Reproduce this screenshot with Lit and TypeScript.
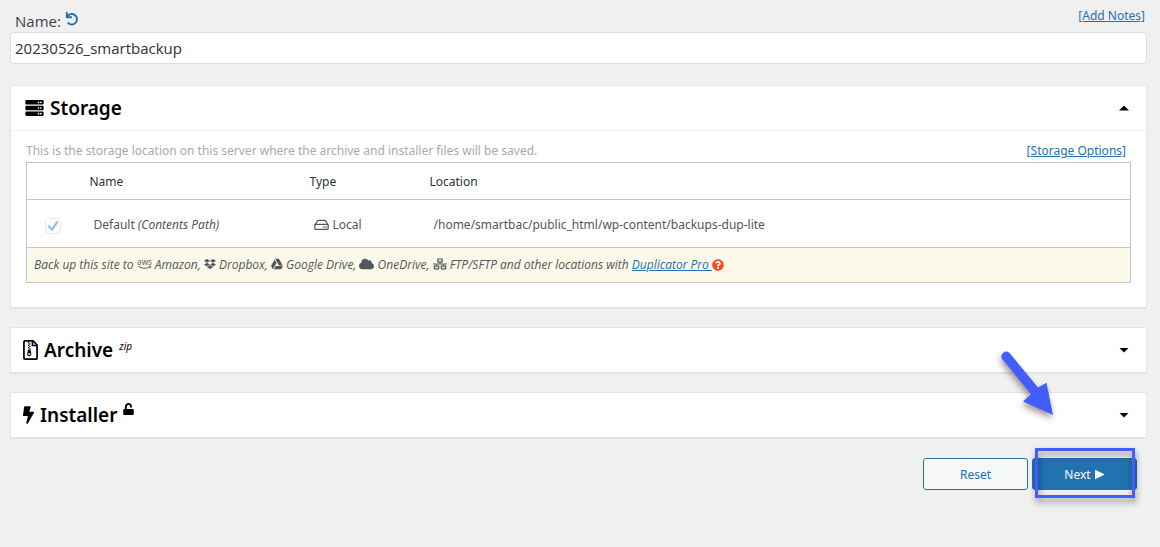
import { LitElement, html, svg, css, nothing } from "lit";
import { customElement, state } from "lit/decorators.js";

const icon = (viewBox: string, cls: string, body: unknown) =>
  html`<svg class="icon ${cls}" viewBox=${viewBox} aria-hidden="true">${body}</svg>`;

const undoIcon = icon(
  "0 0 14 14",
  "undo",
  svg`<path d="M1.8 .8V5.2H6.2M2.2 4.8A5.2 5.2 0 1 1 3.2 11" fill="none" stroke="currentColor" stroke-width="1.9" stroke-linecap="round" stroke-linejoin="round"/>`
);

const serverIcon = icon(
  "0 0 512 448",
  "server",
  svg`<path fill-rule="evenodd" d="M32 0h448c18 0 32 14 32 32v64c0 18-14 32-32 32H32c-18 0-32-14-32-32V32c0-18 14-32 32-32zm400 40a24 24 0 1 0 0 48 24 24 0 0 0 0-48zm-64 0a24 24 0 1 0 0 48 24 24 0 0 0 0-48zM32 160h448c18 0 32 14 32 32v64c0 18-14 32-32 32H32c-18 0-32-14-32-32v-64c0-18 14-32 32-32zm400 40a24 24 0 1 0 0 48 24 24 0 0 0 0-48zm-64 0a24 24 0 1 0 0 48 24 24 0 0 0 0-48zM32 320h448c18 0 32 14 32 32v64c0 18-14 32-32 32H32c-18 0-32-14-32-32v-64c0-18 14-32 32-32zm400 40a24 24 0 1 0 0 48 24 24 0 0 0 0-48zm-64 0a24 24 0 1 0 0 48 24 24 0 0 0 0-48z"/>`
);

const archiveIcon = icon(
  "0 0 384 512",
  "file",
  svg`<path d="M48 24h208l104 104v336c0 13-11 24-24 24H48c-13 0-24-11-24-24V48c0-13 11-24 24-24z" fill="none" stroke="currentColor" stroke-width="44"/>
  <path d="M242 24v118h118" fill="none" stroke="currentColor" stroke-width="40"/>
  <path d="M128 48h32v32h-32zM160 80h32v32h-32zM128 112h32v32h-32zM160 144h32v32h-32zM128 176h32v32h-32zM160 208h32v32h-32z"/>
  <path fill-rule="evenodd" d="M130 240h60l22 104c8 42-18 72-54 72s-60-32-52-72zm30 96c-18 0-32 10-32 24s14 24 32 24 32-10 32-24-14-24-32-24z"/>`
);

const boltIcon = icon(
  "0 0 320 512",
  "bolt",
  svg`<path d="M296 160H180.6l42.6-129.8C227.2 15 215.7 0 200 0H56C44 0 33.8 8.9 32.2 20.8l-32 240C-1.7 275.2 9.5 288 24 288h118.7L96.6 482.5c-3.6 15.2 8 29.5 23.3 29.5 8.4 0 16.4-4.4 20.8-12l176-304c9.3-15.9-2.2-36-20.7-36z"/>`
);

const unlockIcon = icon(
  "0 0 448 512",
  "unlock",
  svg`<path d="M400 256H152V152.9c0-39.6 31.7-72.5 71.3-72.9 40-.4 72.7 32.1 72.7 72v16c0 13.3 10.7 24 24 24h32c13.3 0 24-10.7 24-24v-16C376 68 307.5-.3 223.5 0 139.5.3 72 69.5 72 153.5V256H48c-26.5 0-48 21.5-48 48v160c0 26.5 21.5 48 48 48h352c26.5 0 48-21.5 48-48V304c0-26.5-21.5-48-48-48z"/>`
);

const driveIcon = icon(
  "0 0 16 12",
  "hdd",
  svg`<path d="M1 6.2 3.6 1.6C3.8 1.2 4.2 1 4.6 1h6.8c.4 0 .8.2 1 .6L15 6.2" fill="none" stroke="currentColor" stroke-width="1.3"/>
  <rect x=".8" y="5.4" width="14.4" height="5.2" rx="1" fill="none" stroke="currentColor" stroke-width="1.3"/>
  <circle cx="10.4" cy="8.1" r=".9"/><circle cx="12.9" cy="8.1" r=".9"/>`
);

const awsIcon = icon(
  "0 0 16 12",
  "aws",
  svg`<text x="8" y="6" text-anchor="middle" font-size="9" font-style="normal" font-weight="400">aws</text>
  <path d="M1 7.8c4 2.8 9 3 12.8 1M12.3 8.1c1-.5 2-.5 2.6-.1.1.8-.3 1.700-1 2.400" fill="none" stroke="currentColor" stroke-width="1"/>`
);

const dropboxIcon = icon(
  "0 0 528 512",
  "dropbox",
  svg`<path d="M264.400 116.300l-132 84.300 132 84.300-132 84.300L0 284.100l132.300-84.300L0 116.300 132.300 32l132.100 84.300zM131.600 395.700l132-84.300 132 84.300-132 84.300-132-84.300zm132.800-111.600l132-84.300-132-83.600L395.700 32 528 116.300l-132.300 84.300L528 284.800l-132.300 84.300-131.300-85z"/>`
);

const gdriveIcon = icon(
  "0 0 512 512",
  "gdrive",
  svg`<path d="M339 314.900L175.400 32h161.200l163.600 282.900H339zm-137.500 23.600L120.900 480h310.500L512 338.500H201.500zM154.100 67.400L0 338.500 80.600 480 237 208.800 154.100 67.400z"/>`
);

const cloudIcon = icon(
  "0 0 640 512",
  "cloud",
  svg`<path d="M537.600 226.600c4.100-10.700 6.400-22.400 6.400-34.600 0-53-43-96-96-96-19.700 0-38.100 6-53.300 16.200C367 64.200 315.300 32 256 32c-88.400 0-160 71.600-160 160 0 2.700.1 5.400.2 8.100C40.200 219.800 0 273.200 0 336c0 79.500 64.500 144 144 144h368c70.700 0 128-57.300 128-128 0-61.900-44-113.600-102.400-125.400z"/>`
);

const networkIcon = icon(
  "0 0 640 512",
  "network",
  svg`<path d="M220 28h200v132H220zM60 352h200v132H60zM380 352h200v132H380z" fill="none" stroke="currentColor" stroke-width="56"/>
  <path d="M0 232h640v48H0zM296 170h48v80h-48zM136 260h48v80h-48zM456 260h48v80h-48z"/>`
);

const helpIcon = icon(
  "0 0 512 512",
  "help",
  svg`<circle cx="256" cy="256" r="200" fill="#fff"/>
  <path d="M504 256c0 136.997-111.043 248-248 248S8 392.997 8 256C8 119.083 119.043 8 256 8s248 111.083 248 248zM262.655 90c-54.497 0-89.255 22.957-116.549 63.758-3.536 5.286-2.353 12.415 2.715 16.258l34.699 26.310c5.205 3.947 12.621 3.008 16.665-2.122 17.864-22.658 30.113-35.797 57.303-35.797 20.429 0 45.698 13.148 45.698 32.958 0 14.976-12.363 22.667-32.534 33.976C247.128 238.528 216 254.941 216 296v4c0 6.627 5.373 12 12 12h56c6.627 0 12-5.373 12-12v-1.333c0-28.462 83.186-29.647 83.186-106.667 0-58.002-60.165-102-116.531-102zM256 338c-25.365 0-46 20.635-46 46 0 25.364 20.635 46 46 46s46-20.636 46-46c0-25.365-20.635-46-46-46z"/>`
);

const pointerArrow = svg`<path d="M14.700 8.300 43 42.500 51.500 37.800 58 70 28 56.500 36 49.300 7.400 14.200A4.700 4.700 0 0 1 14.700 8.300Z"/>`;

@customElement("app-root")
export class AppRoot extends LitElement {
  @state() private open: Record<string, boolean> = { storage: true };

  static styles = css`
    :host {
      display: block;
      min-height: 100vh;
      box-sizing: border-box;
      padding: 8px 13px 48px 10px;
      background: #f0f0f1;
      color: #3c434a;
      font: 12px/20px "Segoe UI", "Noto Sans", "Open Sans", sans-serif;
    }
    *, *::before { box-sizing: border-box; }
    .icon { fill: currentColor; flex: none; overflow: visible; }
    a { color: #2271b1; }
    button { font: inherit; cursor: pointer; }
    .name-row {
      display: flex;
      align-items: flex-start;
      justify-content: space-between;
      height: 24px;
      padding: 0 2px 0 5px;
    }
    .name-label {
      display: flex;
      gap: 4px;
      font-family: "Segoe UI", "Open Sans", "Noto Sans", sans-serif;
      font-size: 15px;
      line-height: 26px;
    }
    .name-row a { line-height: 16px; }
    .link-button {
      display: flex;
      height: 22px;
      align-items: center;
      padding: 0;
      border: 0;
      background: none;
      color: #2271b1;
    }
    .undo { width: 14px; height: 14px; }
    .name-input {
      display: block;
      width: 100%;
      height: 32px;
      padding: 0 4px;
      border: 1px solid #dcdcde;
      border-radius: 4px;
      background: #fff;
      color: #2c3338;
      font-family: "Segoe UI", "Open Sans", "Noto Sans", sans-serif;
      font-size: 15px;
    }
    .panels { display: grid; gap: 18px; margin-top: 21px; }
    .panel { border: 1px solid #e2e4e7; border-bottom-width: 2px; background: #fff; }
    .panel-head {
      display: flex;
      align-items: center;
      justify-content: space-between;
      height: 44px;
      padding: 0 17px 0 12px;
    }
    .panel-head.open { height: 45px; padding-left: 14px; border-bottom: 1px solid #f0f0f1; }
    .title {
      display: flex;
      align-items: center;
      gap: 6px;
      margin: 0;
      color: #000;
      font-size: 19px;
      font-weight: 600;
      line-height: 24px;
    }
    .title sup {
      align-self: flex-start;
      font-size: 10px;
      font-weight: 400;
      font-style: italic;
      line-height: 16px;
    }
    .server { width: 19px; height: 16px; }
    .file { width: 15px; height: 20px; }
    .bolt { width: 11px; height: 18px; }
    .unlock { display: block; width: 11px; height: 12px; }
    .toggle { display: flex; padding: 4px 0; border: 0; background: none; color: #000; }
    .caret { width: 10px; height: 5px; background: currentColor; clip-path: polygon(0 0, 100% 0, 50% 100%); }
    .open .caret { clip-path: polygon(50% 0, 100% 100%, 0 100%); }
    .panel-body { padding: 10px 15px 24px; }
    .intro {
      display: flex;
      justify-content: space-between;
      margin-bottom: 1px;
      padding-right: 5px;
      color: #a7aaad;
    }
    .storage {
      width: 100%;
      border-collapse: collapse;
      border: 1px solid #c3c4c7;
      table-layout: fixed;
    }
    .storage tr { border-bottom: 1px solid #c3c4c7; }
    .storage th { height: 37px; padding: 2px 10px 0; color: #2c3338; font-weight: 400; text-align: left; }
    .storage td { height: 48px; padding: 2px 14px 0; color: #50575e; }
    .storage .check-cell { padding: 4px 0 0; text-align: center; }
    .check-col { width: 53px; }
    .name-col { width: 220px; }
    .type-col { width: 120px; }
    .type { display: flex; align-items: center; gap: 4px; }
    .hdd { width: 15px; height: 12px; }
    .tick {
      display: inline-block;
      appearance: none;
      width: 16px;
      height: 16px;
      margin: 0;
      border: 1px solid #e8e9eb;
      border-radius: 4px;
      background: #fff;
      vertical-align: middle;
    }
    .tick:checked::before {
      content: "";
      display: block;
      width: 12px;
      height: 12px;
      margin: 1px;
      background: #91c5ec;
      clip-path: polygon(0 52%, 16% 40%, 38% 62%, 78% 4%, 96% 12%, 42% 94%);
    }
    .storage .promo {
      height: 35px;
      padding: 0 7px;
      background: #fcf9e8;
      color: #50575e;
      font-family: "Segoe UI", "Open Sans", "Noto Sans", sans-serif;
      font-style: italic;
    }
    .promo .icon { vertical-align: -1px; }
    .aws { width: 15px; height: 11px; }
    .dropbox { width: 12px; height: 12px; }
    .gdrive { width: 12px; height: 12px; }
    .cloud { width: 15px; height: 12px; }
    .network { width: 14px; height: 12px; }
    .promo .help { width: 12px; height: 12px; color: #ff4a1c; vertical-align: -2px; }
    .actions { display: flex; justify-content: flex-end; gap: 4px; margin-top: 19px; padding-right: 10px; }
    .button {
      width: 105px;
      height: 32px;
      padding: 1px 0 0;
      border: 1px solid #2271b1;
      border-radius: 3px;
      background: #f6f7f7;
      color: #2271b1;
    }
    .button.primary {
      display: flex;
      align-items: center;
      justify-content: center;
      gap: 4px;
      background: #2271b1;
      color: #fff;
    }
    .play { width: 10px; height: 10px; background: currentColor; clip-path: polygon(0 0, 100% 50%, 0 100%); }
    .next { position: relative; }
    .highlight {
      position: absolute;
      inset: -10px 2px -8px 3px;
      border: 3px solid #415dfa;
      filter: drop-shadow(1px 4px 3px rgb(0 0 0 / 45%));
      pointer-events: none;
    }
    .pointer {
      position: absolute;
      left: -37px;
      top: -113px;
      width: 70px;
      height: 80px;
      fill: #415dfa;
      filter: drop-shadow(-1px 4px 3px rgb(60 20 30 / 45%));
      pointer-events: none;
    }
  `;

  private toggle(id: string) {
    this.open = { ...this.open, [id]: !this.open[id] };
  }

  private panel(id: string, label: string, glyph: unknown, note: unknown, body: unknown) {
    const isOpen = !!this.open[id];
    return html`<section class="panel">
      <header class="panel-head ${isOpen ? "open" : ""}">
        <h2 class="title">${glyph}<span>${label}</span>${note}</h2>
        <button class="toggle" aria-label="Toggle ${label}" aria-expanded=${isOpen} @click=${() => this.toggle(id)}>
          <span class="caret"></span>
        </button>
      </header>
      ${isOpen && body ? html`<div class="panel-body">${body}</div>` : nothing}
    </section>`;
  }

  private storageBody() {
    return html`<div class="intro">
        <span>This is the storage location on this server where the archive and installer files will be saved.</span>
        <a href="#storage">[Storage Options]</a>
      </div>
      <table class="storage">
        <colgroup>
          <col class="check-col" /><col class="name-col" /><col class="type-col" /><col />
        </colgroup>
        <thead>
          <tr><th></th><th>Name</th><th>Type</th><th>Location</th></tr>
        </thead>
        <tbody>
          <tr>
            <td class="check-cell"><input class="tick" type="checkbox" aria-label="Default" checked disabled /></td>
            <td>Default <i>(Contents Path)</i></td>
            <td><span class="type">${driveIcon}<span>Local</span></span></td>
            <td>/home/smartbac/public_html/wp-content/backups-dup-lite</td>
          </tr>
          <tr>
            <td class="promo" colspan="4">
              Back up this site to ${awsIcon} Amazon, ${dropboxIcon} Dropbox, ${gdriveIcon} Google Drive,
              ${cloudIcon} OneDrive, ${networkIcon} FTP/SFTP and other locations with
              <a href="#pro">Duplicator Pro&nbsp;</a>${helpIcon}
            </td>
          </tr>
        </tbody>
      </table>`;
  }

  render() {
    return html`
      <div class="name-row">
        <div class="name-label">
          <label for="package-name">Name:</label>
          <button class="link-button" aria-label="Reset name">${undoIcon}</button>
        </div>
        <a href="#notes">[Add Notes]</a>
      </div>
      <input class="name-input" id="package-name" type="text" value="20230526_smartbackup" />
      <div class="panels">
        ${this.panel("storage", "Storage", serverIcon, nothing, this.storageBody())}
        ${this.panel("archive", "Archive", archiveIcon, html`<sup>zip</sup>`, nothing)}
        ${this.panel("installer", "Installer", boltIcon, html`<sup>${unlockIcon}</sup>`, nothing)}
      </div>
      <div class="actions">
        <button class="button">Reset</button>
        <div class="next">
          <button class="button primary"><span>Next</span><span class="play"></span></button>
          <div class="highlight"></div>
          <svg class="pointer" viewBox="0 0 70 80" aria-hidden="true">${pointerArrow}</svg>
        </div>
      </div>
    `;
  }
}
